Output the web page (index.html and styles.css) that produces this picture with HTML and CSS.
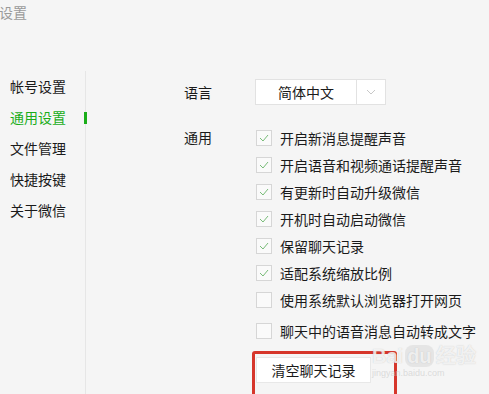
FILE: index.html
```html
<!DOCTYPE html>
<html lang="zh-CN">
<head>
  <meta charset="UTF-8">
  <title>设置</title>
  <link rel="stylesheet" href="styles.css">
</head>
<body>
  <div class="title">设置</div>

  <div class="layout">
    <ul class="nav">
      <li class="nav-item">帐号设置</li>
      <li class="nav-item active">通用设置</li>
      <li class="nav-item">文件管理</li>
      <li class="nav-item">快捷按键</li>
      <li class="nav-item">关于微信</li>
    </ul>

    <div class="main">
      <div class="row lang-row">
        <span class="label">语言</span>
        <div class="dropdown">
          <span class="dropdown-value">简体中文</span>
          <span class="dropdown-arrow">
            <svg width="10" height="6" viewBox="0 0 10 6"><polyline points="1,1 5,5 9,1" fill="none" stroke="#c8c8c8" stroke-width="1"/></svg>
          </span>
        </div>
      </div>

      <div class="row general-row">
        <span class="label">通用</span>
        <ul class="options">
          <li class="option"><span class="checkbox checked"></span>开启新消息提醒声音</li>
          <li class="option"><span class="checkbox checked"></span>开启语音和视频通话提醒声音</li>
          <li class="option"><span class="checkbox checked"></span>有更新时自动升级微信</li>
          <li class="option"><span class="checkbox checked"></span>开机时自动启动微信</li>
          <li class="option"><span class="checkbox checked"></span>保留聊天记录</li>
          <li class="option"><span class="checkbox checked"></span>适配系统缩放比例</li>
          <li class="option"><span class="checkbox"></span>使用系统默认浏览器打开网页</li>
          <li class="option last"><span class="checkbox"></span>聊天中的语音消息自动转成文字</li>
        </ul>
      </div>

      <div class="mark-box">
        <button class="btn">清空聊天记录</button>
      </div>
    </div>
  </div>

  <div class="watermark">
    <span class="wm-big">Bai<span class="wm-du">du</span>经验</span>
    <span class="wm-small">jingyan.baidu.com</span>
  </div>
</body>
</html>
```

FILE: styles.css
```css
:root {
  --bg: #f5f5f5;
  --text: #1a1a1a;
  --green: #1aad19;
  --line: #e6e6e6;
  --box-border: #d6d6d6;
  --red: #d6362b;
}
* { box-sizing: border-box; }
body {
  margin: 0;
  height: 394px;
  overflow: hidden;
  background: var(--bg);
  color: var(--text);
  font-family: "Noto Sans CJK SC", "Noto Sans", sans-serif;
  font-size: 14px;
  position: relative;
}
ul { list-style: none; margin: 0; padding: 0; }

.title {
  color: #9a9a9a;
  line-height: 20px;
  margin-top: 2px;
  margin-left: -1px;
}

.layout {
  display: flex;
  margin-top: 49px;
}
.nav {
  width: 86px;
  padding-left: 10px;
  border-right: 1px solid var(--line);
  height: 330px;
}
.nav-item {
  line-height: 31px;
  position: relative;
}
.nav-item.active { color: var(--green); }
.nav-item.active::after {
  content: "";
  position: absolute;
  right: -2px;
  top: 10px;
  width: 3px;
  height: 12px;
  background: var(--green);
}

.main {
  padding-left: 98px;
  padding-top: 8px;
}
.row { display: flex; }
.label {
  width: 71px;
  flex-shrink: 0;
}
.lang-row { align-items: center; height: 26px; }
.dropdown {
  display: flex;
  height: 26px;
  width: 131px;
  background: #fff;
  border: 1px solid #e2e2e2;
}
.dropdown-value {
  width: 101px;
  text-align: center;
  line-height: 24px;
  border-right: 1px solid #e2e2e2;
}
.dropdown-arrow {
  flex: 1;
  display: flex;
  align-items: center;
  justify-content: center;
}

.general-row { margin-top: 19px; }
.general-row .label { line-height: 27px; }
.option {
  display: flex;
  align-items: center;
  height: 27px;
}
.option.last { margin-top: 4px; }
.checkbox {
  width: 16px;
  height: 16px;
  border: 1px solid var(--box-border);
  background: #fafafa;
  margin-right: 8px;
  margin-left: 1px;
  flex-shrink: 0;
}
.checkbox.checked {
  background: #fafafa url("data:image/svg+xml;utf8,<svg xmlns='http://www.w3.org/2000/svg' width='14' height='14' viewBox='0 0 14 14'><polyline points='3,7 6,10 11,4' fill='none' stroke='%2378bc78' stroke-width='1'/></svg>") center no-repeat;
}

.mark-box {
  margin-top: 7px;
  margin-left: 68px;
  width: 145px;
  height: 60px;
  border: 3px solid var(--red);
  border-radius: 3px;
  padding: 3px 0 0 1px;
}
.btn {
  display: block;
  width: 115px;
  height: 26px;
  background: #fff;
  border: 1px solid #e8e8e8;
  font-family: inherit;
  font-size: 14px;
  color: var(--text);
  padding: 0;
}

.watermark {
  position: absolute;
  left: 372px;
  top: 344px;
  color: rgba(255, 255, 255, 0.75);
  text-shadow: 0 0 1px rgba(150, 150, 150, 0.5);
  pointer-events: none;
}
.wm-big {
  display: block;
  font-family: "Liberation Sans", sans-serif;
  font-weight: bold;
  font-size: 20px;
  line-height: 24px;
}
.wm-du {
  background: rgba(200, 200, 200, 0.35);
  border-radius: 8px;
  padding: 0 2px;
  margin: 0 2px;
}
.wm-small {
  display: block;
  font-family: "Liberation Sans", sans-serif;
  font-size: 9px;
  color: rgba(200, 200, 200, 0.6);
  text-shadow: none;
}
```
